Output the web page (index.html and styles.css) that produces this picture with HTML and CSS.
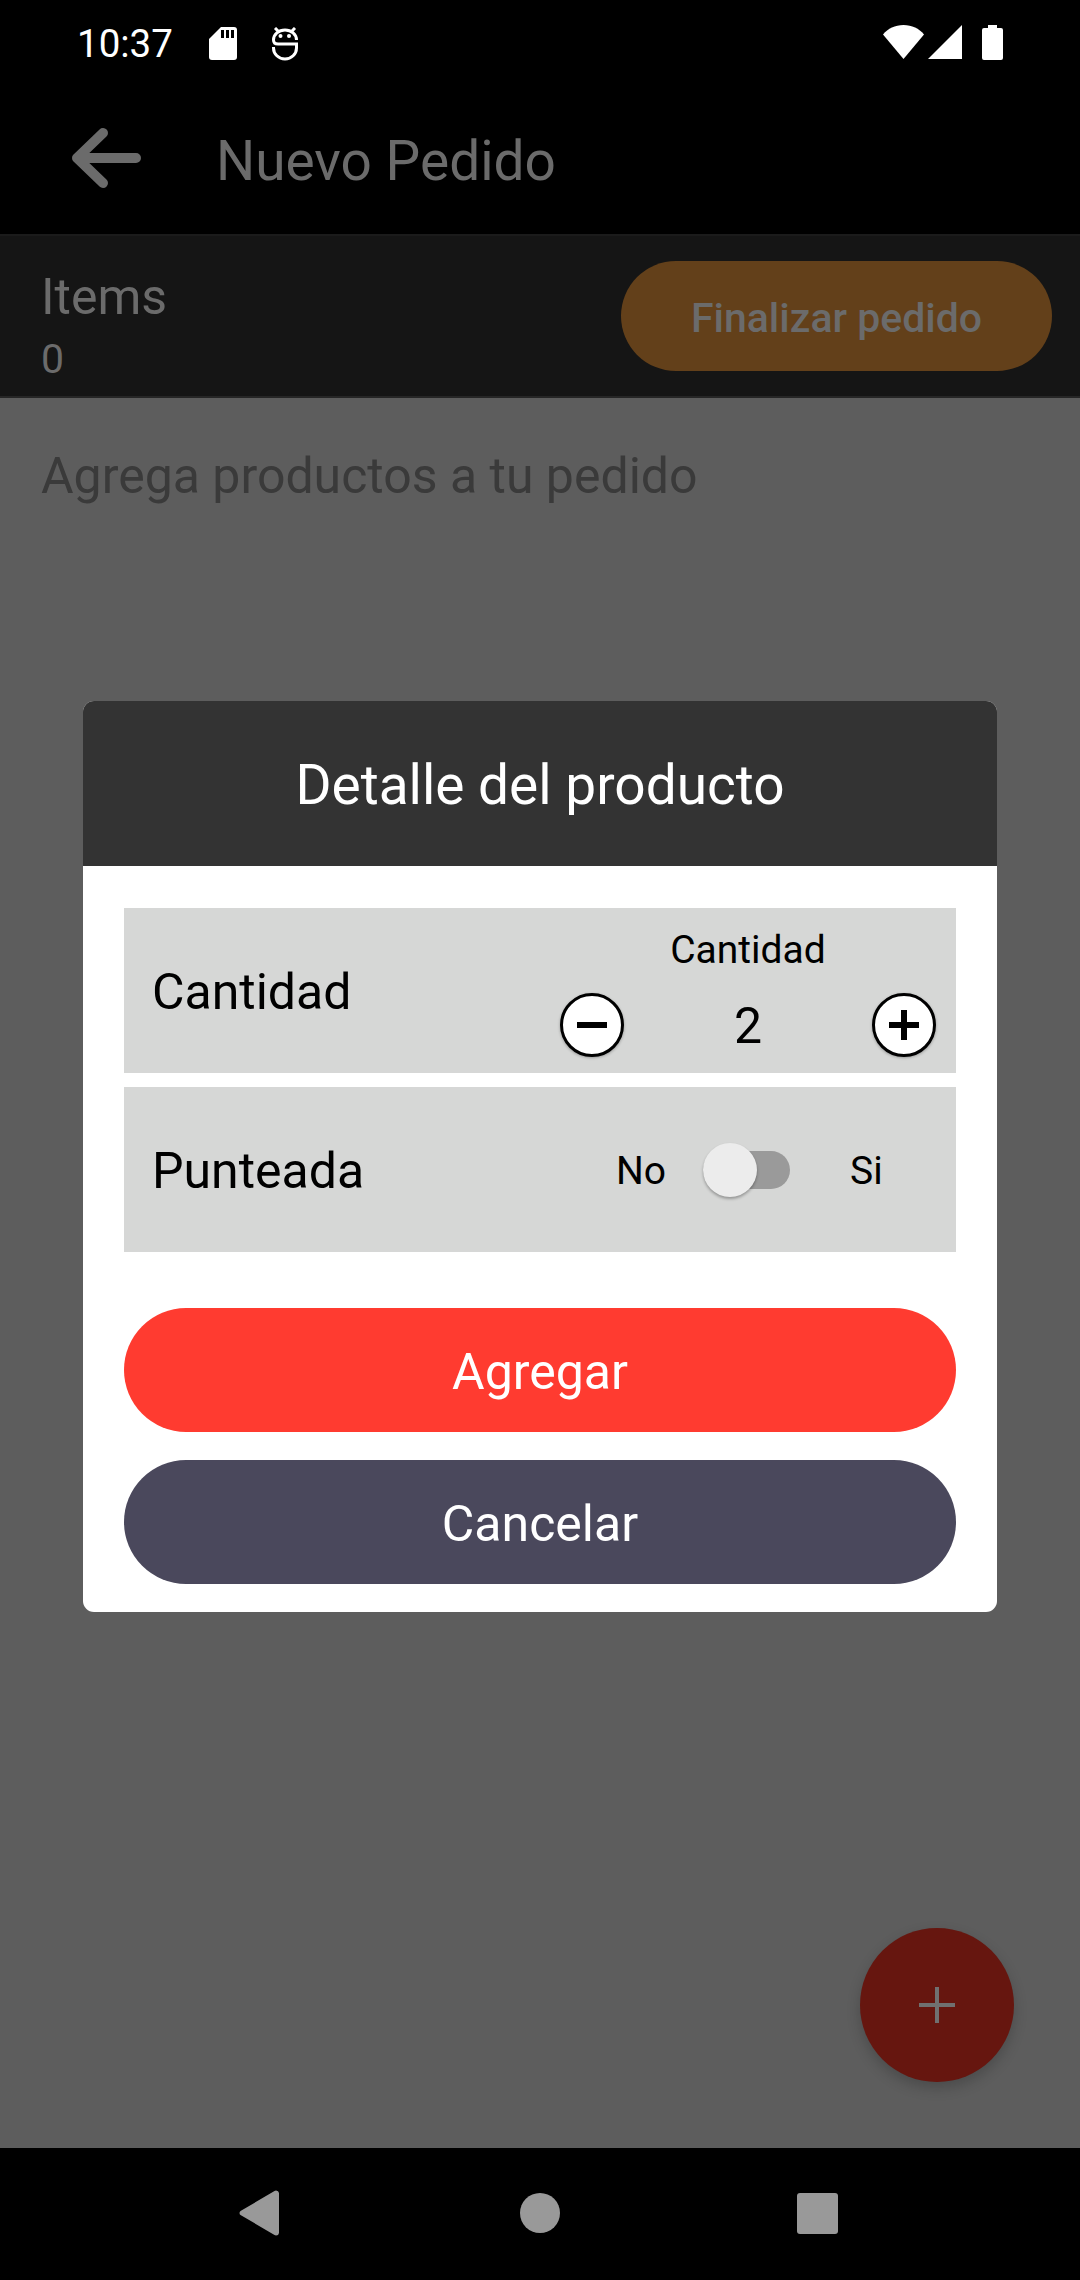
FILE: index.html
```html
<!DOCTYPE html>
<html lang="es">
<head>
  <meta charset="UTF-8">
  <title>Nuevo Pedido</title>
  <meta name="viewport" content="width=device-width, initial-scale=1.0">
  <link rel="stylesheet" href="styles.css">
</head>
<body>

  <div class="screen">
    <div class="status-bar">
      <div class="status-left">
        <span class="clock">10:37</span>
        <svg class="icon-sd" width="28" height="33" viewBox="0 0 28 33">
          <path fill="#fff" d="M12 0h13a3 3 0 0 1 3 3v27a3 3 0 0 1-3 3H3a3 3 0 0 1-3-3V12z"/>
          <path fill="#000" d="M12 3h3v8h-3zM17 3h3v8h-3zM22 3h3v8h-3z"/>
        </svg>
        <svg class="icon-s" width="26" height="34" viewBox="0 0 26 34" fill="none" stroke="#fff" stroke-width="3">
          <path d="M3 1l3 3M23 1l-3 3"/>
          <path d="M24.500 13A11.500 10 0 0 0 1.500 13Q1.500 17 6 17H24.500V21A11.500 11 0 0 1 1.500 21V20"/>
          <circle cx="8.500" cy="9" r="2" fill="#fff" stroke="none"/>
          <circle cx="17" cy="9" r="2" fill="#fff" stroke="none"/>
        </svg>
      </div>
      <div class="status-right">
        <svg width="41" height="34" viewBox="0 0 41 34"><path fill="#fff" d="M0 9.500C5 3.500 12 0 20.500 0S36 3.500 41 9.500L20.500 34z"/></svg>
        <svg width="34" height="34" viewBox="0 0 34 34"><path fill="#fff" d="M34 0v34H0z"/></svg>
        <svg class="icon-batt" width="21" height="35" viewBox="0 0 21 35"><path fill="#fff" d="M6 0h9v3h4a2 2 0 0 1 2 2v28a2 2 0 0 1-2 2H2a2 2 0 0 1-2-2V5a2 2 0 0 1 2-2h4z"/></svg>
      </div>
    </div>

    <header class="toolbar">
      <svg class="back" width="70" height="60" viewBox="0 0 70 60" fill="none" stroke="#6b6b6b" stroke-width="10" stroke-linecap="round" stroke-linejoin="round">
        <path d="M64 30H5M31 5L5 30l26 25"/>
      </svg>
      <h1>Nuevo Pedido</h1>
    </header>

    <section class="items-bar">
      <div class="items-info">
        <div class="items-label">Items</div>
        <div class="items-count">0</div>
      </div>
      <button class="finish-btn">Finalizar pedido</button>
    </section>

    <main class="content">
      <p class="empty">Agrega productos a tu pedido</p>
      <button class="fab">
        <svg width="36" height="36" viewBox="0 0 36 36"><path fill="#707070" d="M16 0h4v16h16v4H20v16h-4V20H0v-4h16z"/></svg>
      </button>
    </main>

    <nav class="nav-bar">
      <svg width="40" height="46" viewBox="0 0 40 46"><path fill="#999" d="M37 0.500a3 3 0 0 1 3 2.500v40a3 3 0 0 1-3 2.500a3 3 0 0 1-1.500-.5L1.500 25a2.500 2.500 0 0 1 0-4L35.500 1a3 3 0 0 1 1.500-.5z"/></svg>
      <span class="nav-circle"></span>
      <span class="nav-square"></span>
    </nav>

    <!-- Detalle modal -->
    <div class="modal-overlay">
      <div class="modal">
        <div class="modal-title">Detalle del producto</div>
        <div class="modal-body">
          <div class="row">
            <span class="row-label">Cantidad</span>
            <div class="qty">
              <span class="qty-title">Cantidad</span>
              <div class="qty-controls">
                <span class="round-btn">
                  <svg width="30" height="30" viewBox="0 0 30 30"><path d="M0 12h30v6H0z"/></svg>
                </span>
                <span class="qty-value">2</span>
                <span class="round-btn">
                  <svg width="30" height="30" viewBox="0 0 30 30"><path d="M12 0h6v12h12v6H18v12h-6V18H0v-6h12z"/></svg>
                </span>
              </div>
            </div>
          </div>
          <div class="row">
            <span class="row-label">Punteada</span>
            <div class="toggle-wrap">
              <span class="toggle-text">No</span>
              <span class="switch"><span class="thumb"></span></span>
              <span class="toggle-text toggle-si">Si</span>
            </div>
          </div>
          <button class="pill pill-add">Agregar</button>
          <button class="pill pill-cancel">Cancelar</button>
        </div>
      </div>
    </div>
  </div>

</body>
</html>
```

FILE: styles.css
```css
* {
  box-sizing: border-box;
}

body {
  font-family: 'Roboto', sans-serif;
  margin: 0;
  padding: 0;
  background-color: #000;
}

button {
  font-family: inherit;
  border: none;
  padding: 0;
}

.screen {
  position: relative;
  width: 1080px;
  height: 2280px;
  display: flex;
  flex-direction: column;
  overflow: hidden;
}

.status-bar {
  height: 63px;
  padding: 25px 77px 0 77px;
  display: flex;
  justify-content: space-between;
  align-items: flex-start;
}

.status-left {
  display: flex;
  align-items: flex-start;
  color: #fff;
}

.clock {
  font-size: 38.5px;
  line-height: 38px;
  width: 132px;
}

.icon-sd {
  margin-top: 2px;
}

.icon-s {
  margin-left: 35px;
  margin-top: 2px;
}

.status-right {
  display: flex;
  gap: 4px;
}

.icon-batt {
  margin-left: 16px;
}

.toolbar {
  height: 171px;
  padding: 19px 0 0 72px;
  background-color: #000;
  display: flex;
  align-items: center;
}

.toolbar h1 {
  margin: 6px 0 0 74px;
  font-size: 55px;
  font-weight: 400;
  color: #6b6b6b;
}

.items-bar {
  height: 164px;
  padding: 0 28px 0 41px;
  background-color: #151515;
  border-top: 2px solid #1b1b1b;
  border-bottom: 2px solid #262626;
  display: flex;
  justify-content: space-between;
  align-items: center;
}

.items-info {
  margin-top: 20px;
}

.items-label {
  font-size: 50px;
  line-height: 66px;
  color: #6b6b6b;
}

.items-count {
  font-size: 41px;
  line-height: 58px;
  color: #6b6b6b;
}

.finish-btn {
  width: 431px;
  height: 110px;
  padding-top: 3px;
  border-radius: 55px;
  background-color: #63401a;
  color: #6b6b6b;
  font-size: 41px;
  font-weight: 500;
}

.content {
  position: relative;
  flex: 1;
  background-color: #5d5d5d;
}

.empty {
  margin: 50px 0 0 41px;
  font-size: 50px;
  line-height: 56px;
  color: #3a3a3a;
}

.fab {
  position: absolute;
  right: 66px;
  bottom: 66px;
  width: 154px;
  height: 154px;
  border-radius: 50%;
  background-color: #66160f;
  box-shadow: 0 6px 14px rgba(0,0,0,0.2);
  display: flex;
  align-items: center;
  justify-content: center;
}

.nav-bar {
  height: 132px;
  background-color: #000;
  position: relative;
  display: flex;
  align-items: center;
  padding-left: 239px;
  padding-bottom: 2px;
}

.nav-circle {
  width: 40px;
  height: 40px;
  margin-left: 241px;
  border-radius: 50%;
  background-color: #999;
}

.nav-square {
  width: 41px;
  height: 41px;
  margin-left: 237px;
  border-radius: 3px;
  background-color: #999;
}

.modal-overlay {
  position: absolute;
  top: 0;
  left: 0;
  right: 0;
  padding: 701px 83px 0;
}

.modal {
  border-radius: 11px;
  background-color: #fff;
  overflow: hidden;
}

.modal-title {
  height: 165px;
  padding-top: 3px;
  background-color: #333;
  color: #fff;
  font-size: 55px;
  display: flex;
  align-items: center;
  justify-content: center;
}

.modal-body {
  padding: 42px 41px 28px;
  display: flex;
  flex-direction: column;
}

.row {
  height: 165px;
  margin-bottom: 14px;
  padding-left: 28px;
  background-color: #d6d7d6;
  display: flex;
  justify-content: space-between;
  align-items: center;
  color: #000;
}

.row-label {
  margin-top: 3px;
  font-size: 50px;
}

.qty {
  width: 376px;
  margin-right: 20px;
  padding-top: 21px;
  align-self: flex-start;
  display: flex;
  flex-direction: column;
  align-items: center;
}

.qty-title {
  font-size: 39px;
  line-height: 43px;
}

.qty-controls {
  width: 100%;
  margin-top: 20px;
  display: flex;
  justify-content: space-between;
  align-items: center;
}

.qty-value {
  margin-top: 2px;
  font-size: 50px;
  line-height: 64px;
}

.round-btn {
  width: 64px;
  height: 64px;
  border: 3px solid #000;
  border-radius: 50%;
  background-color: #fff;
  box-shadow: 0 1px 3px rgba(0,0,0,0.3);
  display: flex;
  align-items: center;
  justify-content: center;
}

.toggle-wrap {
  width: 340px;
  display: flex;
  align-items: center;
  font-size: 39px;
}

.toggle-text {
  margin-top: 2px;
  line-height: 54px;
}

.switch {
  position: relative;
  width: 87px;
  height: 38px;
  margin-left: 37px;
  border-radius: 19px;
  background-color: #9a9a9a;
}

.thumb {
  position: absolute;
  left: 0;
  top: -8px;
  width: 54px;
  height: 54px;
  border-radius: 50%;
  background-color: #ececec;
  box-shadow: 0 2px 3px rgba(0,0,0,0.3);
}

.toggle-si {
  margin-left: 60px;
}

.pill {
  height: 124px;
  padding-top: 3px;
  border-radius: 62px;
  color: #fff;
  font-size: 50px;
}

.pill-add {
  margin-top: 42px;
  background-color: #ff3b30;
}

.pill-cancel {
  margin-top: 28px;
  background-color: #4a485c;
}
```
